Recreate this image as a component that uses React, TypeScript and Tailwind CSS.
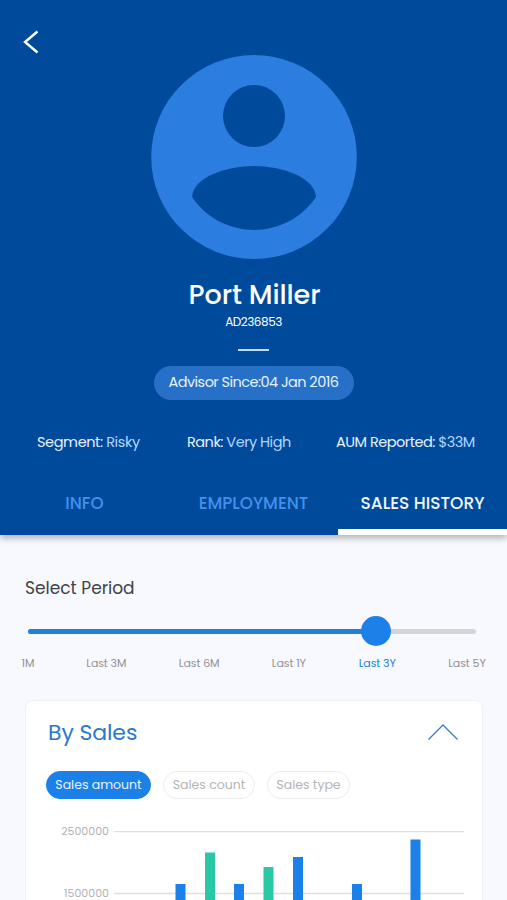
import React, { useState } from "react";
import clsx from "clsx";

const stats = [
  { label: "Segment:", value: "Risky", width: "w-[103px]", tracking: "tracking-[-0.4px]" },
  { label: "Rank:", value: "Very High", width: "w-[102px]", tracking: "tracking-[-0.5px]" },
  { label: "AUM Reported:", value: "$33M", width: "w-[139px]", tracking: "tracking-[-0.5px]" },
];

const tabs = ["INFO", "EMPLOYMENT", "SALES HISTORY"];

const periods = [
  { label: "1M", width: "w-3" },
  { label: "Last 3M", width: "w-[41px]" },
  { label: "Last 6M", width: "w-[41px]" },
  { label: "Last 1Y", width: "w-[35px]" },
  { label: "Last 3Y", width: "w-[38px]" },
  { label: "Last 5Y", width: "w-[38px]" },
];

const filters = [
  { label: "Sales amount", width: "w-[105px]" },
  { label: "Sales count", width: "w-[92px]" },
  { label: "Sales type", width: "w-[83px]" },
];

// x offset and top of each bar inside the plot
const bars = [
  { x: 61.5, top: 53, color: "#1b80e8" },
  { x: 91, top: 21.5, color: "#2bc8a6" },
  { x: 120, top: 53, color: "#1b80e8" },
  { x: 149.5, top: 36, color: "#2bc8a6" },
  { x: 179, top: 26, color: "#1b80e8" },
  { x: 238, top: 53, color: "#1b80e8" },
  { x: 296.5, top: 8.5, color: "#1b80e8" },
];

const Avatar = () => (
  <svg width="206" height="204" viewBox="0 0 206 204" className="shrink-0">
    <ellipse cx="103" cy="102" rx="102.8" ry="102" fill="#2b7ee0" />
    <circle cx="103" cy="61" r="31" fill="#004a9c" />
    <path
      d="M41 142C42 122 76 111 103 111S164 122 165 142C151 163 127 175 103 175S55 163 41 142Z"
      fill="#004a9c"
    />
  </svg>
);

const Header = ({ activeTab, setActiveTab }) => {
  return (
    <header className="relative z-10 flex h-[535px] flex-col items-center bg-[#004a9c] text-white shadow-[0_3px_7px_rgba(0,0,0,0.3)]">
      <div className="h-[55px] w-full shrink-0 pl-[23px] pt-[30px]">
        <button className="block" aria-label="Back">
          <svg width="16" height="24" viewBox="0 0 16 24" fill="none" stroke="white" strokeWidth="2.4">
            <path d="M14.5 1.5L2 12L14.5 22.5" />
          </svg>
        </button>
      </div>

      <Avatar />

      <h1 className="mt-4 pl-0.5 text-[27px] font-medium leading-[40px] tracking-[-0.1px]">Port Miller</h1>
      <p className="text-xs leading-[14px] tracking-[-0.45px]">AD236853</p>
      <div className="mt-[20px] h-[2px] w-[31px] bg-[#c3dcf7]" />
      <div className="mt-[15px] flex h-[34px] w-[200px] items-center justify-center rounded-full bg-[#2770c8] text-[14.5px] tracking-[-0.55px] text-[#e6f2ff]">
        Advisor Since:04 Jan 2016
      </div>

      <div className="mt-[31px] flex w-full justify-between pl-[37px] pr-[32px] text-[14.5px] leading-[22px]">
        {stats.map((s) => (
          <div key={s.label} className={clsx("whitespace-nowrap text-[#e6f2ff]", s.width, s.tracking)}>
            {s.label} <span className="text-[#b0d6ff]">{s.value}</span>
          </div>
        ))}
      </div>

      <nav className="mt-auto grid w-full grid-cols-3">
        {tabs.map((tab) => (
          <button
            key={tab}
            onClick={() => setActiveTab(tab)}
            className={clsx(
              "h-[64px] whitespace-nowrap border-b-[6px] pt-[7px] font-medium",
              tab === activeTab
                ? "border-white text-[17px] text-[#f0f7ff]"
                : "border-transparent text-[16.8px] text-[#4391ec]"
            )}
          >
            {tab}
          </button>
        ))}
      </nav>
    </header>
  );
};

const PeriodSlider = ({ period, setPeriod }) => {
  return (
    <section className="pt-[41px]">
      <h2 className="pl-[25px] text-[17px] leading-6 text-[#414247]">Select Period</h2>

      <div className="relative ml-7 mt-[29px] h-[5px] w-[448px] rounded-full bg-[#d4d4d9]">
        <div className="h-full w-[348px] rounded-full bg-[#217fdf]" />
        <div className="absolute left-[333px] top-[-13px] h-[30px] w-[30px] rounded-full bg-[#1b80e8]" />
      </div>

      <div className="mt-[21px] flex justify-between pl-[22px] pr-[21px] text-[11px] leading-4">
        {periods.map((p) => (
          <button
            key={p.label}
            onClick={() => setPeriod(p.label)}
            className={clsx(
              "flex justify-center whitespace-nowrap tracking-[-0.1px]",
              p.width,
              p.label === period ? "text-[#217fdf]" : "text-[#919196]"
            )}
          >
            {p.label}
          </button>
        ))}
      </div>
    </section>
  );
};

const SalesChart = () => (
  <div className="mt-[20px] flex pl-[19px]">
    <div className="w-[64px] text-right text-[11px] leading-[24px] text-[#b2b2b6]">
      <div className="mb-[38px]">2500000</div>
      <div>1500000</div>
    </div>
    <svg width="350" height="70" viewBox="0 0 350 70" className="ml-[5px] mt-3">
      <path d="M0 .5H350M0 62.5H350" stroke="#e0e0e2" strokeWidth="1.4" />
      {bars.map((b) => (
        <rect key={b.x} x={b.x} y={b.top} width="10" height="70" fill={b.color} />
      ))}
    </svg>
  </div>
);

const SalesCard = () => {
  const [filter, setFilter] = useState("Sales amount");

  return (
    <section className="ml-[25px] mt-[29px] h-[260px] w-[458px] rounded-lg border border-[#f0f1f5] bg-white">
      <div className="flex items-center justify-between pl-[22px] pr-[24px] pt-[15px]">
        <h2 className="pt-px text-[22px] leading-[31px] tracking-[-0.1px] text-[#2878cb]">By Sales</h2>
        <svg width="30" height="16" viewBox="0 0 30 16" fill="none" stroke="#407fc5" strokeWidth="1.4">
          <path d="M.5 15.5L15 1L29.5 15.5" />
        </svg>
      </div>

      <div className="mt-[23px] flex gap-3 pl-5">
        {filters.map((f) => (
          <button
            key={f.label}
            onClick={() => setFilter(f.label)}
            className={clsx(
              "h-[28px] whitespace-nowrap rounded-full border pt-px text-[12.5px]",
              f.width,
              f.label === filter
                ? "border-[#1b80e8] bg-[#1b80e8] text-[#e9f5ff]"
                : "border-[#ececef] text-[#b4b4b8]"
            )}
          >
            {f.label}
          </button>
        ))}
      </div>

      <SalesChart />
    </section>
  );
};

const App = () => {
  const [activeTab, setActiveTab] = useState("SALES HISTORY");
  const [period, setPeriod] = useState("Last 3Y");

  return (
    <main className="h-[900px] w-[507px] overflow-hidden bg-[#f8f9fe] font-[Poppins,Inter,sans-serif]">
      <Header activeTab={activeTab} setActiveTab={setActiveTab} />
      <PeriodSlider period={period} setPeriod={setPeriod} />
      <SalesCard />
    </main>
  );
};

export default App;
